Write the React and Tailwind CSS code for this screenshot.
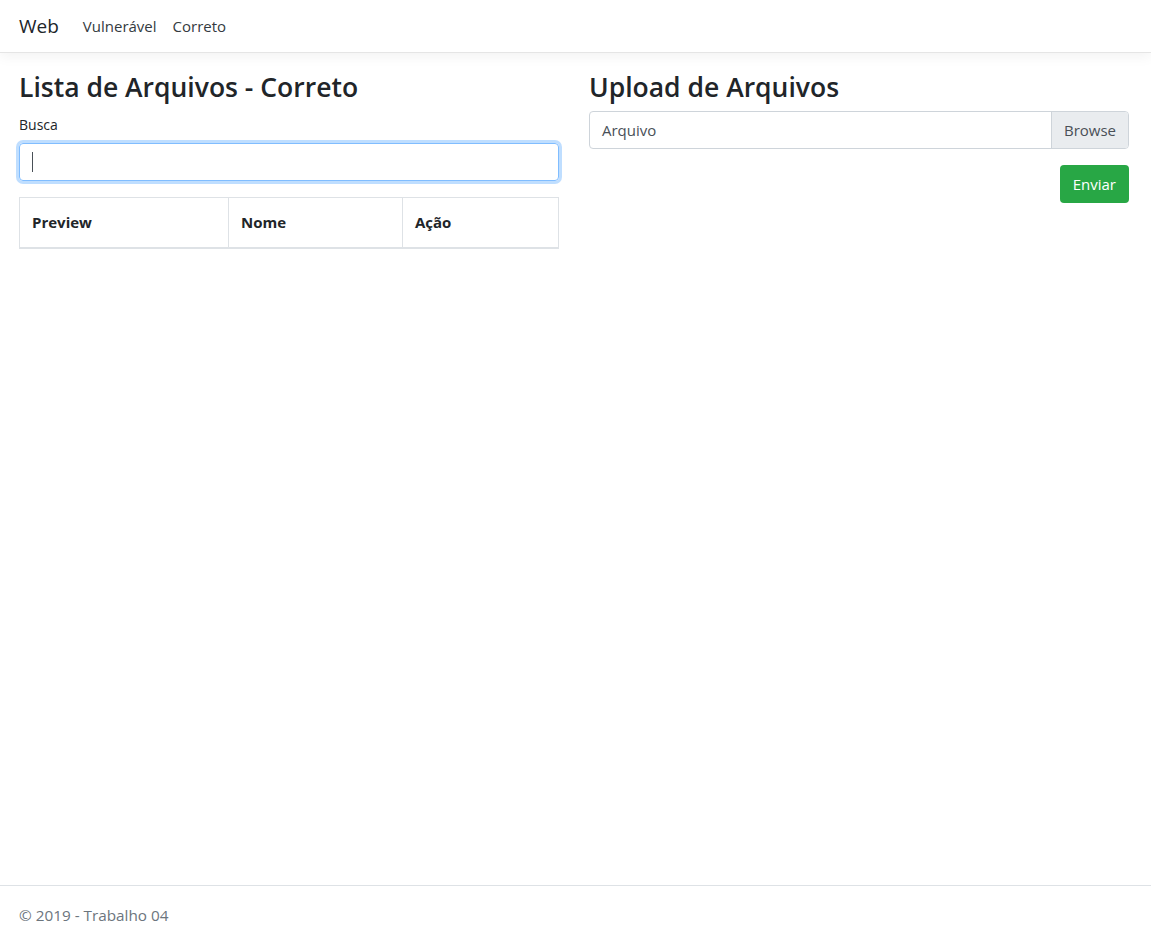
export default function App() {
  return (
    <div
      className="flex min-h-screen flex-col bg-white text-[#212529]"
      style={{ fontFamily: '"Segoe UI", "Open Sans", "Noto Sans", sans-serif' }}
    >
      <header className="h-[53px] border-b border-[#e5e5e5] bg-white shadow-[0_4px_12px_rgba(0,0,0,0.05)]">
        <nav className="flex h-full items-center px-[19px]">
          <span className="mr-[16px] text-[19px] text-[#212529]">Web</span>
          <a className="px-[8px] text-[15px] text-[#343a40]">Vulnerável</a>
          <a className="px-[8px] text-[15px] text-[#343a40]">Correto</a>
        </nav>
      </header>

      <main className="flex-1 px-[19px] pt-[17px]">
        <div className="flex w-[1110px] gap-[30px]">
          <section className="w-[540px]">
            <h2 className="mb-[10px] text-[26.5px] leading-[34px] font-semibold">
              Lista de Arquivos - Correto
            </h2>
            <label className="block text-[14px] leading-[21px]">Busca</label>
            <div className="mt-[8px] mb-[16px] flex h-[38px] items-center rounded-[4px] border border-[#80bdff] px-[12px] shadow-[0_0_0_3px_rgba(0,123,255,0.25)]">
              <span className="h-[20px] w-px bg-[#495057]" />
            </div>
            <table className="w-full border-collapse border border-[#dee2e6] text-[15px]">
              <thead>
                <tr className="h-[50px] border-b-2 border-[#dee2e6] text-left">
                  <th className="w-[209px] border-r border-[#dee2e6] px-[12px] font-bold">Preview</th>
                  <th className="w-[174px] border-r border-[#dee2e6] px-[12px] font-bold">Nome</th>
                  <th className="px-[12px] font-bold">Ação</th>
                </tr>
              </thead>
            </table>
          </section>

          <section className="w-[540px]">
            <h2 className="mb-[7px] text-[26.5px] leading-[34px] font-semibold">Upload de Arquivos</h2>
            <div className="flex h-[38px] overflow-hidden rounded-[4px] border border-[#ced4da] text-[15px]">
              <span className="flex flex-1 items-center px-[12px] text-[#495057]">Arquivo</span>
              <span className="flex items-center border-l border-[#ced4da] bg-[#e9ecef] px-[12px] text-[#495057]">
                Browse
              </span>
            </div>
            <div className="mt-[16px] flex justify-end">
              <button className="h-[38px] rounded-[4px] bg-[#28a745] px-[13px] text-[15px] text-white">
                Enviar
              </button>
            </div>
          </section>
        </div>
      </main>

      <footer className="flex h-[60px] items-center border-t border-[#dee2e6] px-[19px] text-[15.3px] text-[#6c757d]">
        © 2019 - Trabalho 04
      </footer>
    </div>
  )
}
